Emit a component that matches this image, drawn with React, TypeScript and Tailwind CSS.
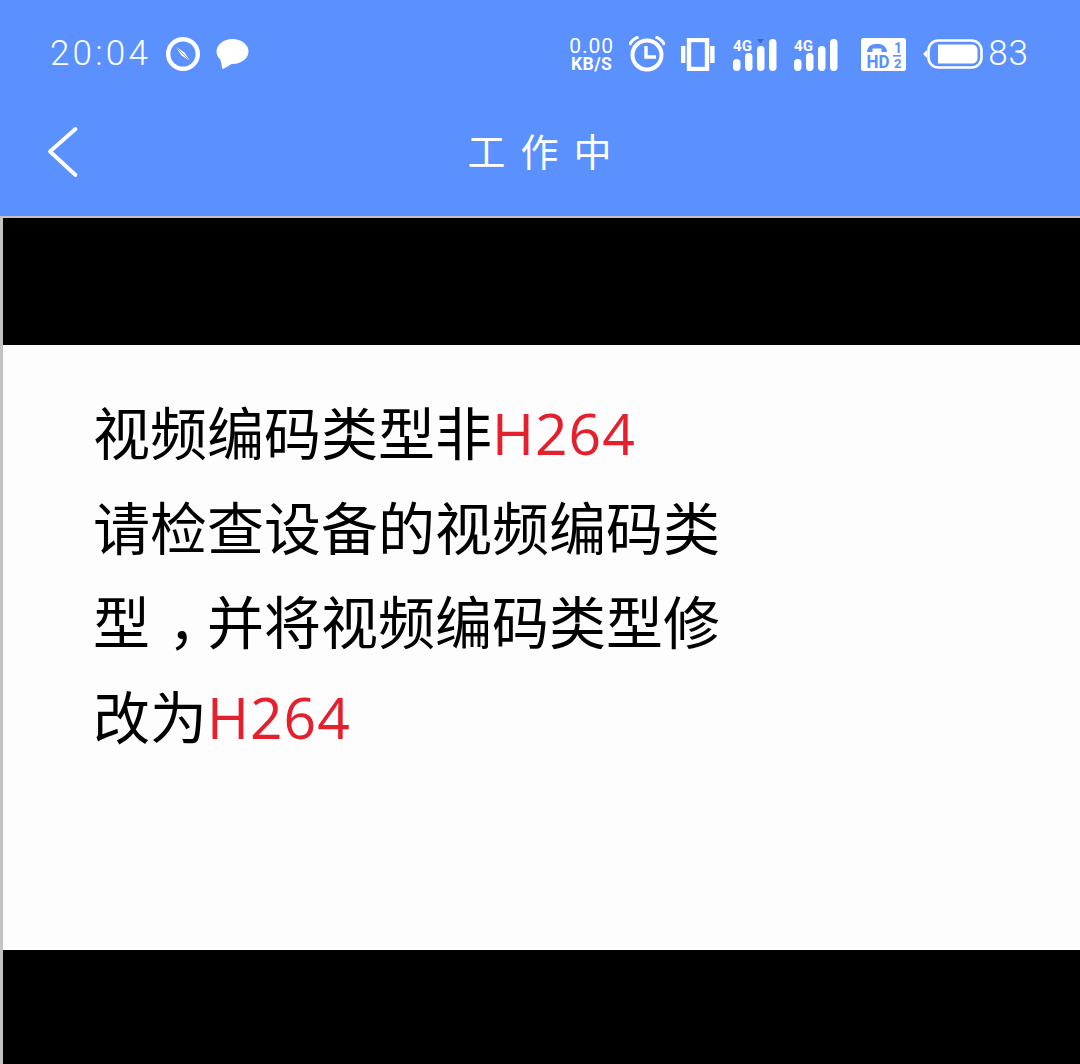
const RED = 'text-[#e3202c] tracking-[1px] font-medium'

function CompassIcon() {
  return (
    <svg width="36" height="36" viewBox="0 0 36 36" fill="none">
      <circle cx="18" cy="18" r="14.8" stroke="white" strokeWidth="4.4" />
      <path d="M11 11 L19.5 16.5 L25 25 L16.5 19.5 Z" fill="white" />
      <path d="M11.5 11.5 L24.5 24.5" stroke="#5b90ff" strokeWidth="0.8" />
    </svg>
  )
}

function ChatIcon() {
  return (
    <svg width="33" height="32" viewBox="0 0 33 32" fill="white">
      <ellipse cx="16.5" cy="13.5" rx="16" ry="12.5" />
      <path d="M4 20 C5 24 6 28 6 30 C6 31 7 31 8 30.5 C11 29 14 27 17 25 Z" />
    </svg>
  )
}

function NetSpeed() {
  return (
    <div className="flex w-[43px] flex-col items-center font-['Roboto',sans-serif] text-white">
      <span className="text-[21px] leading-[20px] font-normal tracking-[1px]">0.00</span>
      <span className="text-[17.5px] leading-[16px] font-bold tracking-[0.4px]">KB/S</span>
    </div>
  )
}

function AlarmIcon() {
  return (
    <svg width="36" height="36" viewBox="0 0 36 36" fill="none" stroke="white">
      <circle cx="18" cy="19" r="14.5" strokeWidth="4" />
      <path d="M17 10 V21 H27" strokeWidth="3.4" />
      <path d="M0.5 9 Q3 3 9.5 1" strokeWidth="3" />
      <path d="M35.5 9 Q33 3 26.5 1" strokeWidth="3" />
    </svg>
  )
}

function VibrateIcon() {
  return (
    <svg width="34" height="33" viewBox="0 0 34 33" fill="none">
      <rect x="8" y="2" width="18" height="29" stroke="white" strokeWidth="4.4" />
      <rect x="0" y="8" width="4.4" height="17" fill="white" />
      <rect x="29.2" y="8" width="4.4" height="17" fill="white" />
    </svg>
  )
}

function SignalIcon({ marker }: { marker?: boolean }) {
  return (
    <svg width="44" height="33" viewBox="0 0 44 33" fill="white">
      <text x="0" y="13" fontFamily="Roboto, sans-serif" fontWeight="700" fontSize="15" textLength="19" lengthAdjust="spacingAndGlyphs">
        4G
      </text>
      <rect x="0" y="21" width="7.5" height="12" rx="3.7" />
      <rect x="12" y="15" width="7.5" height="18" rx="3.7" />
      <rect x="24" y="8" width="7.5" height="25" rx="3.7" />
      <rect x="36" y="1" width="7.5" height="32" rx="3.7" />
      {marker && <path d="M24 1 H31 L27.5 5.5 Z" fill="#3f66b4" />}
    </svg>
  )
}

function HdIcon() {
  return (
    <svg width="45" height="33" viewBox="0 0 45 33" className="overflow-visible">
      <rect width="45" height="33" rx="2.5" fill="white" />
      <path d="M6 14 C6 3 26 3 26 14 H20.5 V10.5 H11.5 V14 Z" fill="#5b90ff" />
      <text x="5.5" y="30" fontFamily="Roboto, sans-serif" fontWeight="700" fontSize="19" textLength="23" lengthAdjust="spacingAndGlyphs" fill="#5b90ff">
        HD
      </text>
      <text x="33" y="15" fontFamily="Roboto, sans-serif" fontWeight="700" fontSize="14" fill="#5b90ff">
        1
      </text>
      <rect x="32" y="17" width="8" height="1.6" fill="#5b90ff" />
      <text x="33" y="30" fontFamily="Roboto, sans-serif" fontWeight="700" fontSize="13" fill="#5b90ff">
        2
      </text>
    </svg>
  )
}

function BatteryIcon() {
  return (
    <svg width="60" height="30" viewBox="0 0 60 30" fill="none">
      <path d="M0 15 L4 11 V19 Z" fill="white" />
      <rect x="5.5" y="1.5" width="53" height="27" rx="10" stroke="white" strokeWidth="2.6" />
      <path d="M15 5.5 H49 C52.5 5.5 54.5 8 54.5 11 V19 C54.5 22 52.5 24.5 49 24.5 H15 Z" fill="white" />
    </svg>
  )
}

function BackIcon() {
  return (
    <svg width="32" height="52" viewBox="0 0 32 52" fill="none">
      <path d="M28.5 3 L3 25.5 L28.5 49" stroke="white" strokeWidth="3.8" strokeLinecap="round" strokeLinejoin="round" />
    </svg>
  )
}

export default function App() {
  return (
    <div className="flex h-[1064px] w-[1080px] flex-col overflow-hidden bg-black">
      <header className="bg-[#5b90ff] text-white">
        <div className="flex h-[108px] items-center pr-[51px] pl-[50px] font-['Roboto',sans-serif]">
          <span className="w-[100px] text-[35px] font-light tracking-[3.2px]">20:04</span>
          <div className="ml-[15px] flex items-center gap-[15px]">
            <CompassIcon />
            <ChatIcon />
          </div>
          <div className="ml-auto flex items-center">
            <NetSpeed />
            <div className="ml-[16px]">
              <AlarmIcon />
            </div>
            <div className="ml-[16px]">
              <VibrateIcon />
            </div>
            <div className="ml-[18px]">
              <SignalIcon marker />
            </div>
            <div className="ml-[17px]">
              <SignalIcon />
            </div>
            <div className="ml-[23px]">
              <HdIcon />
            </div>
            <div className="ml-[17px]">
              <BatteryIcon />
            </div>
            <span className="ml-[5px] text-[35px] font-light tracking-[1px]">83</span>
          </div>
        </div>
        <div className="relative flex h-[108px] items-center justify-center">
          <div className="absolute top-[18px] left-[47px]">
            <BackIcon />
          </div>
          <span className="pb-[24px] pl-[14px] font-['Noto_Sans_CJK_SC',sans-serif] text-[38px] leading-[50px] font-normal tracking-[15px]">
            工作中
          </span>
        </div>
      </header>
      <main className="flex min-h-0 flex-1 flex-col border-t-2 border-l-[3px] border-[#c3c3c3]">
        <div className="h-[127px] bg-black" />
        <div className="h-[605px] bg-[#fdfdfd] pt-[41px] pl-[90px] font-['Open_Sans','Noto_Sans_CJK_SC',sans-serif] text-[57px] leading-[94.5px] text-black">
          <p>
            视频编码类型非<span className={RED}>H264</span>
          </p>
          <p>请检查设备的视频编码类</p>
          <p className="flex">
            <span>型</span>
            <span className="ml-[18px] w-[39px] [font-feature-settings:'halt']">，</span>
            <span>并将视频编码类型修</span>
          </p>
          <p>
            改为<span className={RED}>H264</span>
          </p>
        </div>
        <div className="flex-1 bg-black" />
      </main>
    </div>
  )
}
